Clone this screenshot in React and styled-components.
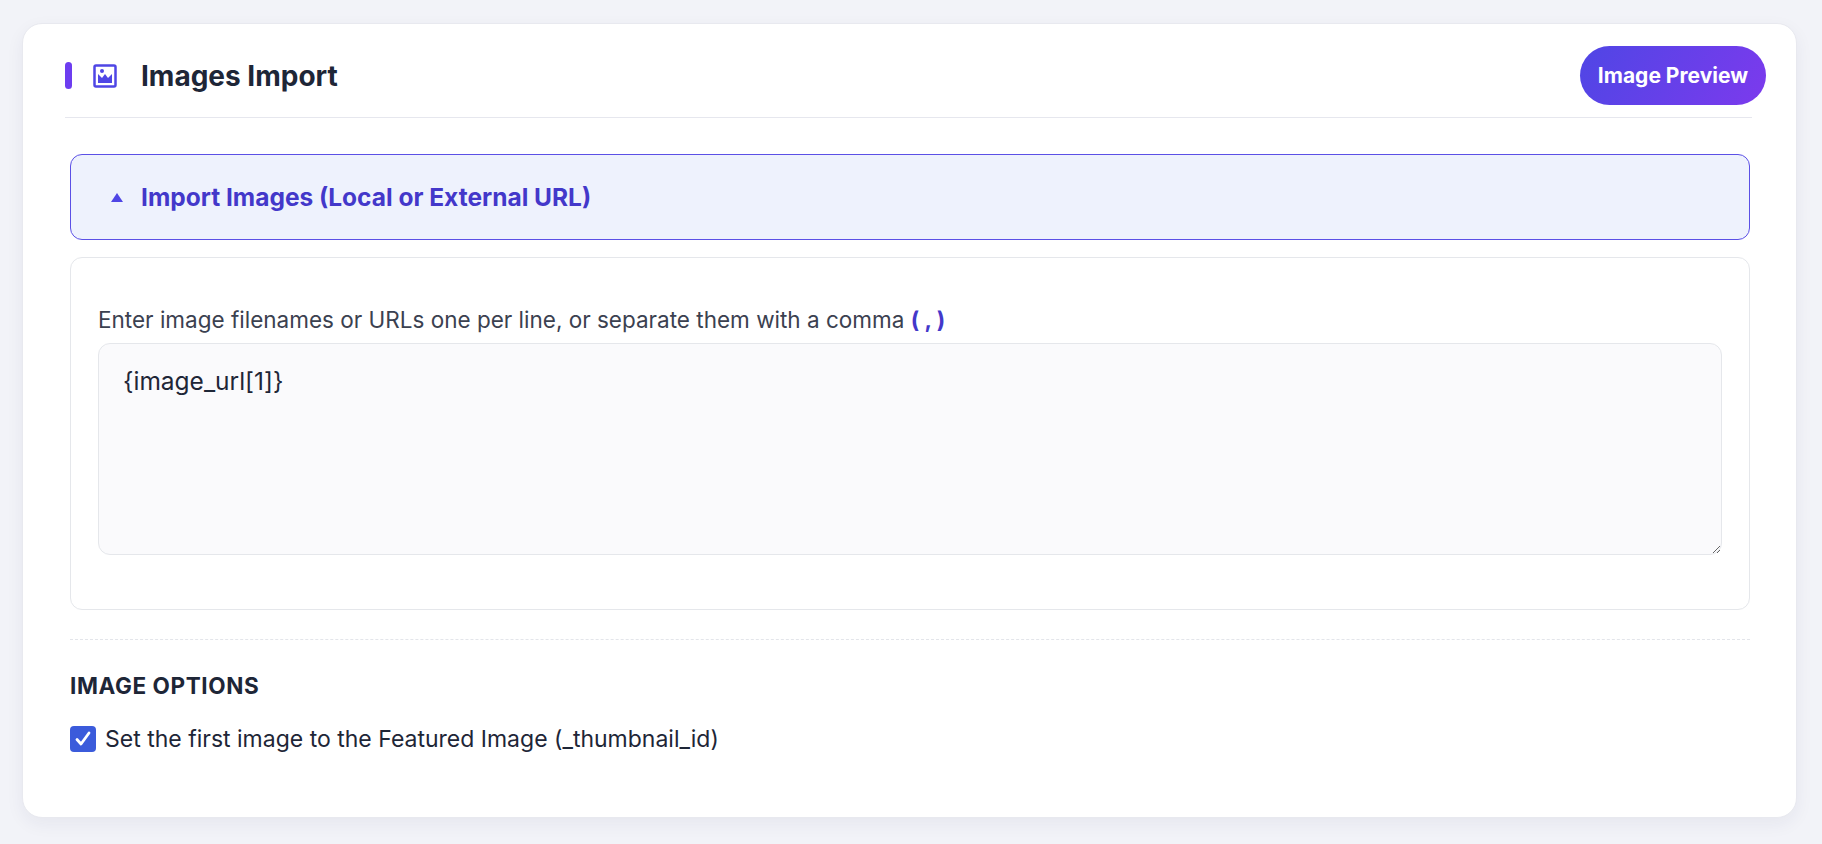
import React from "react";
import styled, { createGlobalStyle } from "styled-components";

const G = createGlobalStyle`
  body { margin:0; background:#f2f3f8; font-family: Inter, "Noto Sans", sans-serif; }
`;
const Page = styled.div`padding:23px 25px 28px 22px;`;
const Card = styled.div`
  background:#fff; border-radius:20px; border:1px solid #e8e9ef;
  box-shadow:0 6px 18px rgba(30,40,80,0.06);
  padding:22px 30px 64px 42px;
`;
const Header = styled.div`
  display:flex; align-items:center; justify-content:space-between;
  padding:0 0 12px 0;
`;
const TitleWrap = styled.div`display:flex; align-items:center;`;
const Accent = styled.div`width:7px; height:27px; border-radius:4px; background:#6d3df0; margin-right:21px;`;
const Title = styled.h1`margin:0 0 0 24px; font-size:28px; font-weight:700; color:#1e2637;`;
const Btn = styled.button`
  border:none; height:59px; padding:0 18px; border-radius:30px; cursor:pointer;
  background:linear-gradient(120deg,#4f46e5,#7c3aed); color:#fff;
  font-family:inherit; font-size:21px; font-weight:700;
`;
const Divider = styled.div`height:1px; background:#e6e7ee; margin-right:14px;`;
const Body = styled.div`padding:0 16px 0 5px;`;
const AccHead = styled.div`
  margin-top:36px; height:86px; box-sizing:border-box; border:1px solid #5b50e6; border-radius:12px;
  background:#eef2fd; display:flex; align-items:center; padding-left:40px; gap:18px;
  color:#4338ca; font-size:24.5px; font-weight:700;
`;
const Tri = styled.span`width:0;height:0;border-left:6px solid transparent;border-right:6px solid transparent;border-bottom:9px solid #4f46e5;`;
const Panel = styled.div`
  margin-top:17px; border:1px solid #e5e7eb; border-radius:12px; padding:48px 27px 54px 27px;
`;
const Label = styled.div`font-size:22.5px; color:#3b4150; margin-bottom:10px;`;
const Comma = styled.span`color:#4338ca; font-weight:700;`;
const Area = styled.textarea`
  display:block; width:100%; box-sizing:border-box; height:212px; resize:vertical;
  background:#fafafc; border:1px solid #e5e7eb; border-radius:12px;
  padding:22px 24px; font-family:inherit; font-size:24.5px; color:#1e2637; outline:none;
`;
const Dashed = styled.div`border-top:1px dashed #e3e5ea; margin-top:29px;`;
const SecTitle = styled.h2`margin:32px 0 0; font-size:22.5px; font-weight:700; letter-spacing:0.6px; color:#1e2637;`;
const CheckRow = styled.label`display:flex; align-items:center; gap:9px; margin-top:26px; font-size:23px; color:#1e2637;`;
const Box = styled.span`
  width:26px; height:26px; border-radius:4px; background:#3b5bdb; display:flex; align-items:center; justify-content:center;
`;

export default function App() {
  return (
    <Page>
      <G />
      <Card>
        <Header>
          <TitleWrap>
            <Accent />
            <svg width="24" height="24" viewBox="0 0 24 24">
              <rect x="1.5" y="1.5" width="21" height="21" rx="1.5" fill="none" stroke="#4f46e5" strokeWidth="2.5" />
              <path d="M5 19 L5 10 L9 14 L12 10 L15 14 L19 10 L19 19 Z" fill="#4f46e5" />
              <circle cx="9" cy="7" r="2" fill="#4f46e5" />
            </svg>
            <Title>Images Import</Title>
          </TitleWrap>
          <Btn>Image Preview</Btn>
        </Header>
        <Divider />
        <Body>
          <AccHead><Tri />Import Images (Local or External URL)</AccHead>
          <Panel>
            <Label>Enter image filenames or URLs one per line, or separate them with a comma <Comma>( , )</Comma></Label>
            <Area defaultValue="{image_url[1]}" />
          </Panel>
          <Dashed />
          <SecTitle>IMAGE OPTIONS</SecTitle>
          <CheckRow>
            <Box>
              <svg width="18" height="18" viewBox="0 0 18 18"><path d="M3 9.5 L7 14 L15 3" fill="none" stroke="#fff" strokeWidth="2.8" strokeLinecap="round" strokeLinejoin="round" /></svg>
            </Box>
            Set the first image to the Featured Image (_thumbnail_id)
          </CheckRow>
        </Body>
      </Card>
    </Page>
  );
}
